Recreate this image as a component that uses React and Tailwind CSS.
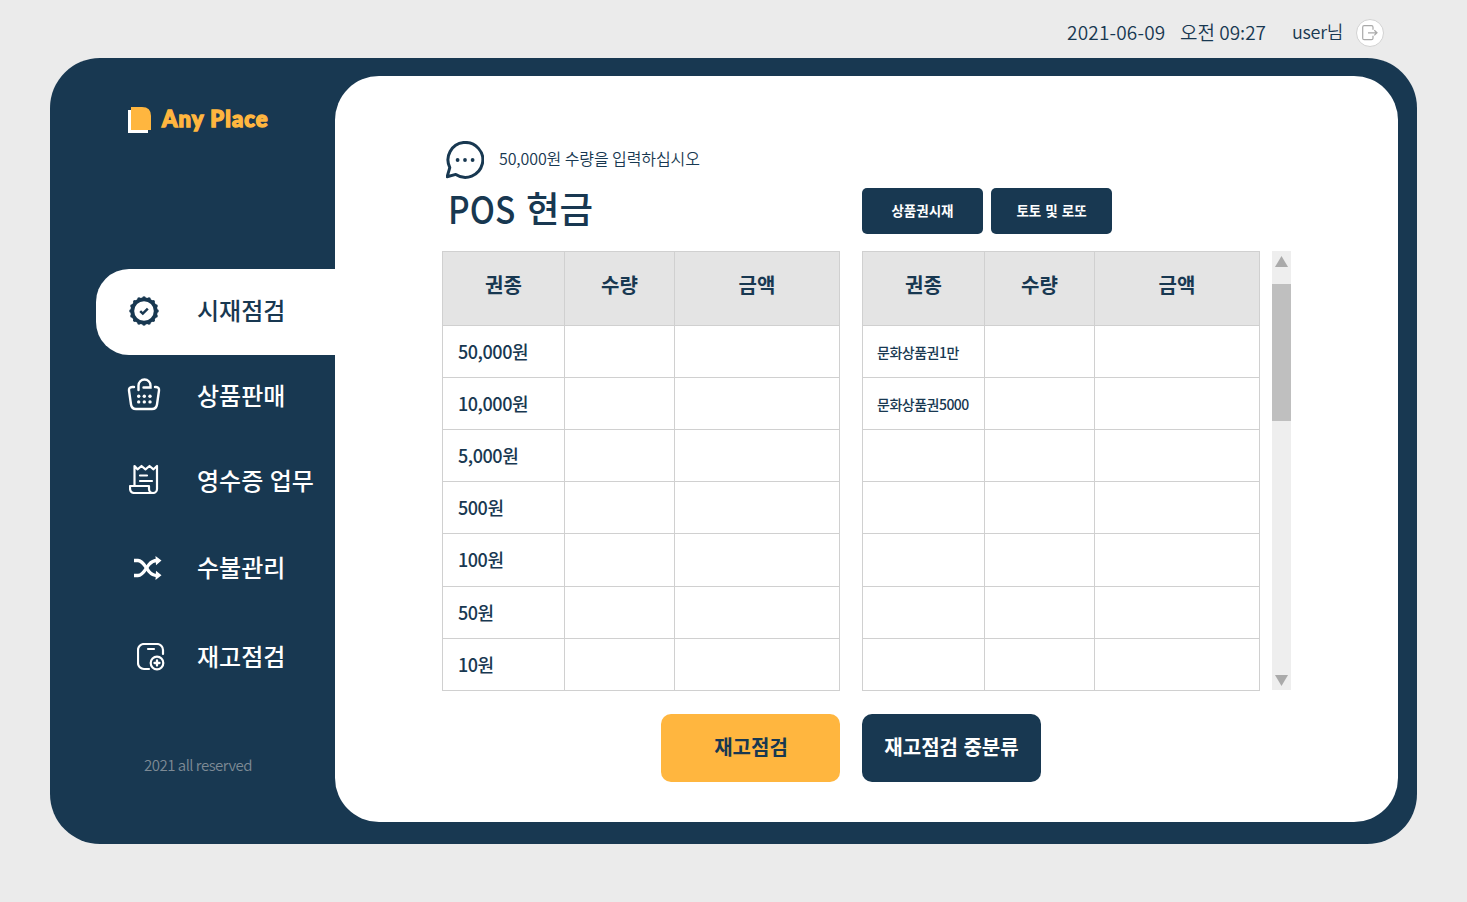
const NAVY = "#183851";

function CheckBadgeIcon() {
  const teeth = Array.from({ length: 16 }, (_, i) => (i * 2 * Math.PI) / 16);
  return (
    <svg width="32" height="32" viewBox="0 0 32 32" fill="none">
      <circle cx="16" cy="16" r="11.7" stroke={NAVY} strokeWidth="3.8" />
      {teeth.map((a) => (
        <circle key={a} cx={16 + 13 * Math.sin(a)} cy={16 - 13 * Math.cos(a)} r="1.8" fill={NAVY} />
      ))}
      <path d="M12.2 16.200l2.600 2.400 5-5" stroke={NAVY} strokeWidth="2.500" />
    </svg>
  );
}

function BasketIcon() {
  return (
    <svg width="34" height="34" viewBox="0 0 34 34" fill="none" stroke="#fff" strokeWidth="2.4" strokeLinecap="round">
      <path d="M7 10H5.200Q1.600 10.200 2 13.500L4 27.500Q4.700 32 9 32H25Q29.300 32 30 27.500L32 13.500Q32.400 10.200 29 10H28" />
      <path d="M11.500 13V8.500A6 6 0 0 1 23.500 8.500V10.500H16.500" />
      <g fill="#fff" stroke="none">
        {[11.7, 17.3, 23].map((x) => [19.3, 24.9].map((y) => <circle key={x + "-" + y} cx={x} cy={y} r="1.7" />))}
      </g>
    </svg>
  );
}

function ReceiptIcon() {
  return (
    <svg width="30" height="30" viewBox="0 0 30 30" fill="none" stroke="#fff" strokeWidth="2.2" strokeLinejoin="round" strokeLinecap="round">
      <path d="M5.500 21V2l3 3.300 4-3.300 4 3.300 4-3.300 4 3.300L28 2V25a4 4 0 0 1-4 4H5.500Q1 29 1 24V22H20V25a4 4 0 0 0 4 4" />
      <path d="M11 11.500h7M11 17h12" />
    </svg>
  );
}

function ShuffleIcon() {
  return (
    <svg width="28" height="24" viewBox="0 0 28 24" fill="none" stroke="#fff" strokeWidth="3.300">
      <path d="M0 4.500H4C9 4.500 12 12 15 15.500Q18.500 19.500 23 19.500" />
      <path d="M0 19.500H4C9 19.500 12 12 15 8.500Q18.500 4.500 23 4.500" />
      <path d="M21.500 0L27.500 4.600 22 9.300ZM22 14.700L27.500 19.200 21.500 24Z" fill="#fff" stroke="none" />
    </svg>
  );
}

function BoxPlusIcon() {
  return (
    <svg width="28" height="28" viewBox="0 0 28 28" fill="none" stroke="#fff" strokeWidth="2.2" strokeLinecap="round">
      <path d="M26 11V7a6 6 0 0 0-6-6H7a6 6 0 0 0-6 6V20a6 6 0 0 0 6 6h5" />
      <path d="M11 6h6" />
      <circle cx="20" cy="20" r="6.300" />
      <path d="M20 17.500v5M17.500 20h5" strokeWidth="2.300" />
    </svg>
  );
}

function ChatIcon() {
  return (
    <svg width="38" height="38" viewBox="0 0 38 38" fill="none">
      <path
        d="M1.500 36.300L4.200 27.200A17.400 17.400 0 1 1 10.200 34Z"
        stroke={NAVY}
        strokeWidth="3"
        strokeLinejoin="round"
        transform="translate(-0.4 -0.6)"
      />
      <g fill={NAVY}>
        <circle cx="11.600" cy="19" r="1.900" />
        <circle cx="19" cy="19" r="1.900" />
        <circle cx="26.600" cy="19" r="1.900" />
      </g>
    </svg>
  );
}

function LogoutIcon() {
  return (
    <svg width="16" height="16" viewBox="0 0 16 16" fill="none" stroke="#a9a9a9" strokeWidth="1.200">
      <path d="M11 4.800V2.200Q11 .7 9.500.7H2.200Q.7.7.7 2.200V13.200Q.7 14.700 2.200 14.700H9.500Q11 14.700 11 13.200V10.800" />
      <path d="M6 7.800H15M12.300 5.200L15 7.800 12.300 10.400" />
    </svg>
  );
}

const menu = [
  { label: "시재점검", icon: <CheckBadgeIcon />, row: "h-[86px] rounded-l-[33px] bg-white text-[#183851] pl-[32px] pb-[3px]", slot: "w-[69px]" },
  { label: "상품판매", icon: <BasketIcon />, row: "h-[83px] text-white pl-[31px] pb-[2px]", slot: "w-[70px] -mt-1" },
  { label: "영수증 업무", icon: <ReceiptIcon />, row: "h-[87px] text-white pl-[33px] pb-[2px]", slot: "w-[68px] -mt-1" },
  { label: "수불관리", icon: <ShuffleIcon />, row: "h-[86px] text-white pl-[38px]", slot: "w-[63px]" },
  { label: "재고점검", icon: <BoxPlusIcon />, row: "h-[92px] text-white pl-[41px]", slot: "w-[60px]" },
];

function Table({ rows, labelClass }) {
  return (
    <div className="grid h-[440px] w-[398px] grid-cols-[122px_110px_165px] grid-rows-[74px_52px_52px_52px_52px_53px_52px_52px] border-l border-t border-[#d0d0d0]">
      {["권종", "수량", "금액"].map((h) => (
        <div key={h} className="flex items-center justify-center border-b border-r border-[#d0d0d0] bg-[#e4e4e4] pb-[8px] text-[20px] font-bold leading-none">
          {h}
        </div>
      ))}
      {rows.map((label, i) => [
        <div key={i + "a"} className={"flex items-center whitespace-nowrap border-b border-r border-[#d0d0d0] " + labelClass}>{label}</div>,
        <div key={i + "b"} className="border-b border-r border-[#d0d0d0]" />,
        <div key={i + "c"} className="border-b border-r border-[#d0d0d0]" />,
      ])}
    </div>
  );
}

export default function App() {
  return (
    <div className="h-[902px] w-[1467px] overflow-hidden bg-[#ebebeb] font-['Noto_Sans_CJK_KR','Noto_Sans',sans-serif] text-[#183851]">
      <header className="flex h-[58px] items-center whitespace-nowrap pl-[1067px] pt-[8px] text-[19px] font-[350] leading-none">
        <span className="w-[113px] pb-1 tracking-[0.2px]">2021-06-09</span>
        <span className="w-[112px] pb-1">오전 09:27</span>
        <span className="w-[64px] pb-1 text-[18px] tracking-[-0.3px]">user님</span>
        <span className="flex size-7 items-center justify-center rounded-full border border-[#d2d2d2] bg-white">
          <LogoutIcon />
        </span>
      </header>

      <div className="ml-[50px] flex h-[786px] w-[1367px] rounded-[50px] bg-[#183851]">
        <aside className="flex w-[285px] flex-col">
          <div className="ml-[78px] mt-[49px] flex h-[26px]">
            <svg width="24" height="26" viewBox="0 0 24 26">
              <path d="M0 3H20V26H0Z" fill="#fff" />
              <path d="M3 0H14Q23 0 23 9V23H3Z" fill="#ffb63f" />
            </svg>
            <span className="ml-[10px] whitespace-nowrap font-['Lato'] text-[22px] font-black leading-[24px] tracking-[1.1px] text-[#ffb63f] [-webkit-text-stroke:1.4px_#ffb63f]">
              Any Place
            </span>
          </div>
          <nav className="ml-[46px] mt-[136px] flex flex-col">
            {menu.map((m) => (
              <div key={m.label} className={"flex items-center whitespace-nowrap text-[24px] font-medium leading-none " + m.row}>
                <span className={"shrink-0 " + m.slot}>{m.icon}</span>
                <span className="pb-[2px] [word-spacing:1px]">{m.label}</span>
              </div>
            ))}
          </nav>
          <div className="ml-[94px] mt-[53px] whitespace-nowrap text-[15px] font-[350] leading-[18px] tracking-[-0.5px] text-[#7d8a95]">2021 all reserved</div>
        </aside>

        <main className="mt-[18px] h-[746px] w-[1063px] rounded-[44px] bg-white pl-[107px] pt-[65px]">
          <div className="flex h-[38px] items-center pl-1">
            <ChatIcon />
            <span className="ml-[15px] whitespace-nowrap pb-[5px] text-[16px] font-[350] leading-none tracking-[-0.1px]">50,000원 수량을 입력하십시오</span>
          </div>

          <div className="mt-[9px] flex h-[46px]">
            <h1 className="flex w-[420px] items-center whitespace-nowrap pb-[6px] pl-[6px] text-[36.500px] font-medium leading-none">
              <span className="w-[78px]">
                <span className="inline-block origin-left scale-x-[0.88] text-[38px]">POS</span>
              </span>
              <span>현금</span>
            </h1>
            <button className="mr-2 h-[46px] w-[121px] rounded-[5px] bg-[#183851] pb-[2px] text-[13.500px] font-bold text-white">상품권시재</button>
            <button className="h-[46px] w-[121px] rounded-[5px] bg-[#183851] pb-[2px] text-[13.500px] font-bold text-white [word-spacing:1px]">토토 및 로또</button>
          </div>

          <div className="mt-[17px] flex">
            <Table
              rows={["50,000원", "10,000원", "5,000원", "500원", "100원", "50원", "10원"]}
              labelClass="pl-[15px] pb-[2px] text-[18px] font-medium leading-none tracking-[-0.450px]"
            />
            <div className="w-[22px]" />
            <Table
              rows={["문화상품권1만", "문화상품권5000", "", "", "", "", ""]}
              labelClass="pl-[14px] pt-[1px] text-[14px] font-medium leading-none tracking-[-0.5px]"
            />
            <div className="ml-3 flex h-[439px] w-[19px] flex-col items-center bg-[#eee]">
              <svg className="mt-[5px]" width="13" height="11" viewBox="0 0 13 11">
                <path d="M6.500 0L13 11H0Z" fill="#aaa" />
              </svg>
              <div className="mt-[17px] h-[137px] w-full bg-[#bfbfbf]" />
              <svg className="mb-[4px] mt-auto" width="13" height="11" viewBox="0 0 13 11">
                <path d="M0 0H13L6.500 11Z" fill="#aaa" />
              </svg>
            </div>
          </div>

          <div className="ml-[219px] mt-[23px] flex gap-[22px] text-[20px] font-bold">
            <button className="h-[68px] w-[179px] rounded-[10px] bg-[#ffb63f] pb-[2px] pl-px">재고점검</button>
            <button className="h-[68px] w-[179px] rounded-[10px] bg-[#183851] pb-[2px] text-white [word-spacing:1px]">재고점검 중분류</button>
          </div>
        </main>
      </div>
    </div>
  );
}
